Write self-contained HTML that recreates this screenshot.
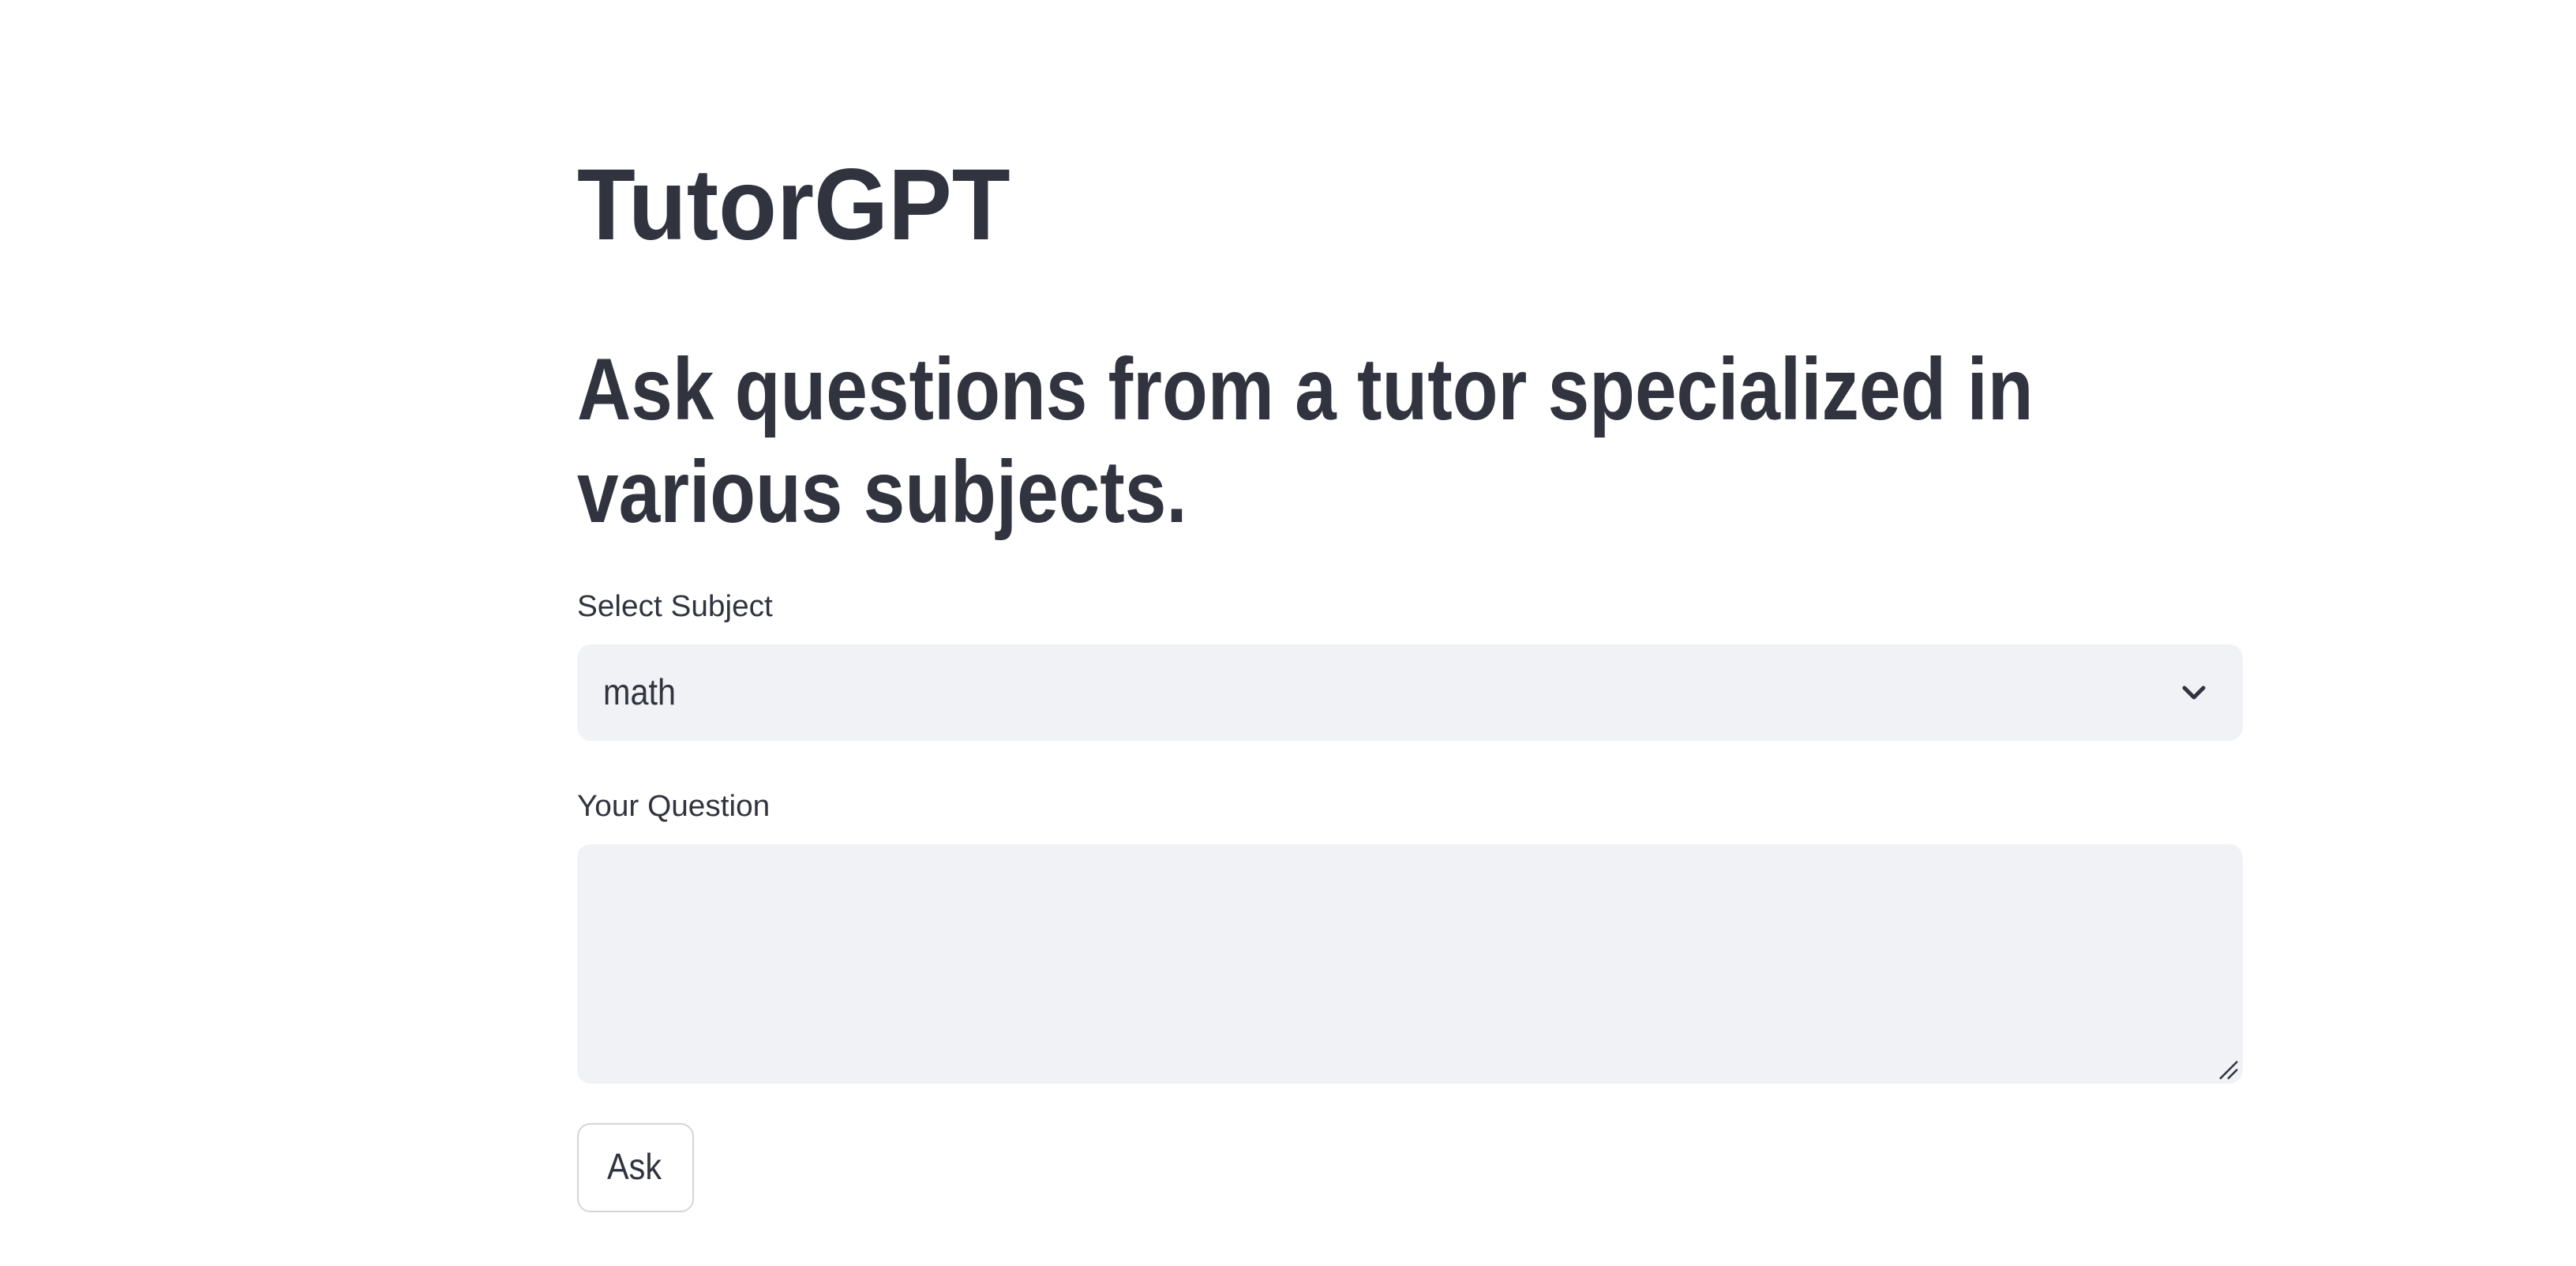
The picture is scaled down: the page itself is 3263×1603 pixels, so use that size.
<!DOCTYPE html>
<html><head><meta charset="utf-8"><style>
html,body{margin:0;padding:0;background:#fff;width:3263px;height:1603px;overflow:hidden;font-family:"Liberation Sans",sans-serif;color:#31333f}
.t{position:absolute;white-space:nowrap;line-height:1.149;transform-origin:0 0}
.box{position:absolute;background:#f0f2f6;border-radius:17px}
</style></head><body>
<div class="t" style="left:731px;top:186px;font-size:128px;font-weight:bold;transform:scaleX(0.945)">TutorGPT</div>
<div class="t" style="left:731px;top:430px;font-size:111px;font-weight:bold;transform:scaleX(0.852)">Ask questions from a tutor specialized in</div>
<div class="t" style="left:731px;top:560px;font-size:111px;font-weight:bold;transform:scaleX(0.852)">various subjects.</div>
<div class="t" style="left:731px;top:747px;font-size:38px;transform:scaleX(1.02)">Select Subject</div>
<div class="box" style="left:731px;top:816px;width:2110px;height:122px"></div>
<div class="t" style="left:764px;top:850px;font-size:46px;transform:scaleX(0.9)">math</div>
<svg style="position:absolute;left:2762px;top:862px" width="34" height="30" viewBox="0 0 34 30"><path d="M5 9 L17 21 L29 9" fill="none" stroke="#31333f" stroke-width="5" stroke-linecap="round" stroke-linejoin="round"/></svg>
<div class="t" style="left:731px;top:1000px;font-size:38px;transform:scaleX(1.02)">Your Question</div>
<div class="box" style="left:731px;top:1069px;width:2110px;height:303px"></div>
<svg style="position:absolute;left:2810px;top:1342px" width="26" height="26" viewBox="0 0 26 26"><path d="M2 24 L24 2 M12 24 L24 12" stroke="#31333f" stroke-width="2.5" fill="none"/></svg>
<div style="position:absolute;left:731px;top:1422px;width:144px;height:109px;border:2px solid #d4d5d9;border-radius:17px;background:#fff"></div>
<div class="t" style="left:769px;top:1451px;font-size:46px;transform:scaleX(0.9)">Ask</div>
</body></html>
